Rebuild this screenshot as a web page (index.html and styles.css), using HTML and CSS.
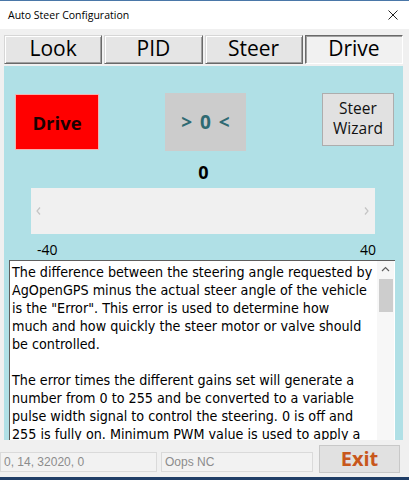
FILE: index.html
```html
<!DOCTYPE html>
<html>
<head>
<meta charset="utf-8">
<title>Auto Steer Configuration</title>
<link rel="stylesheet" href="styles.css">
</head>
<body>
<div class="window">
  <div class="titlebar">
    <span class="title">Auto Steer Configuration</span>
    <svg class="close" width="10" height="10" viewBox="0 0 10 10"><path d="M0.5 0.5 L9.5 9.5 M9.5 0.5 L0.5 9.5" stroke="#222" stroke-width="1" fill="none"/></svg>
  </div>
  <div class="body">
    <div class="tabs">
      <div class="tab">Look</div>
      <div class="tab">PID</div>
      <div class="tab">Steer</div>
      <div class="tab selected">Drive</div>
    </div>
    <div class="panel">
      <div class="controls">
        <div class="btn btn-drive">Drive</div>
        <div class="btn btn-center">&gt; 0 &lt;</div>
        <div class="btn btn-wizard">Steer<br>Wizard</div>
      </div>
      <div class="value">0</div>
      <div class="hscroll">
        <svg width="5" height="8" viewBox="0 0 5 8"><path d="M4 0.5 L1 4 L4 7.5" stroke="#c4c4c4" stroke-width="1.2" fill="none"/></svg>
        <svg width="5" height="8" viewBox="0 0 5 8"><path d="M1 0.5 L4 4 L1 7.5" stroke="#c4c4c4" stroke-width="1.2" fill="none"/></svg>
      </div>
      <div class="scale"><span>-40</span><span>40</span></div>
      <div class="textbox">
        <div class="text">
          <p>The difference between the steering angle requested by<br>AgOpenGPS minus the actual steer angle of the vehicle<br>is the "Error". This error is used to determine how<br>much and how quickly the steer motor or valve should<br>be controlled.</p>
          <p>The error times the different gains set will generate a<br>number from 0 to 255 and be converted to a variable<br>pulse width signal to control the steering. 0 is off and<br>255 is fully on. Minimum PWM value is used to apply a</p>
        </div>
        <div class="vscroll">
          <svg class="up" width="9" height="6" viewBox="0 0 9 6"><path d="M1 5 L4.5 1.5 L8 5" stroke="#606060" stroke-width="1.2" fill="none"/></svg>
          <div class="thumb"></div>
        </div>
      </div>
    </div>
    <div class="footer">
      <div class="status s1">0, 14, 32020, 0</div>
      <div class="status s2">Oops NC</div>
      <div class="btn-exit">Exit</div>
    </div>
  </div>
  <div class="bottomline"></div>
</div>
</body>
</html>
```
FILE: styles.css
```css
* { box-sizing: border-box; }
html, body { margin: 0; padding: 0; }
body {
  width: 409px;
  height: 480px;
  overflow: hidden;
  background: #f0f0f0;
  font-family: "Open Sans", "Noto Sans", sans-serif;
}
.window {
  width: 409px;
  height: 480px;
  display: flex;
  flex-direction: column;
}
.titlebar {
  height: 29px;
  background: #ffffff;
  border-top: 1px solid #4a77a8;
  display: flex;
  align-items: center;
  justify-content: space-between;
  padding: 0 11px 0 8px;
}
.title {
  font-size: 10.5px;
  color: #000;
}
.close { display: block; }
.body {
  flex: 1;
  display: flex;
  flex-direction: column;
  background: #f0f0f0;
}
.tabs {
  display: grid;
  grid-template-columns: repeat(4, 1fr);
  column-gap: 2px;
  padding: 6px 6px 0 4px;
}
.tab {
  height: 29px;
  background: #e5e5e5;
  border: 1px solid;
  border-color: #d6d6d6 #696969 #696969 #d6d6d6;
  box-shadow: inset 1px 1px 0 #ffffff, inset -1px -1px 0 #a0a0a0;
  font-size: 21px;
  line-height: 25px;
  text-align: center;
  color: #000;
}
.tab.selected {
  background: #f1f1f1;
  border-color: #696969 #ffffff #ffffff #696969;
  box-shadow: inset 1px 1px 0 #a0a0a0;
}
.panel {
  margin: 2px 6px 0 4px;
  height: 374px;
  background: #b0e0e6;
  display: flex;
  flex-direction: column;
  overflow: hidden;
}
.controls {
  display: flex;
  align-items: flex-start;
  margin-top: 27px;
  padding: 0 9px 0 11px;
}
.btn {
  display: flex;
  align-items: center;
  justify-content: center;
  text-align: center;
}
.btn-drive {
  width: 84px;
  height: 56px;
  margin-top: 1px;
  background: #ff0000;
  border: 1px solid #f2b3b3;
  font-weight: bold;
  font-size: 18.5px;
  color: #1c0000;
}
.btn-center {
  width: 81px;
  height: 58px;
  margin-left: 66px;
  background: #cccccc;
  font-weight: bold;
  font-size: 19px;
  word-spacing: 3px;
  color: #2f6a72;
}
.btn-wizard {
  width: 72px;
  height: 53px;
  margin-left: auto;
  padding-bottom: 4px;
  background: #e1e1e1;
  border: 1px solid #adadad;
  font-size: 15.5px;
  line-height: 20px;
  color: #111;
}
.value {
  margin-top: 10px;
  text-align: center;
  font-weight: bold;
  font-size: 18px;
  line-height: 22px;
  color: #000;
}
.hscroll {
  margin: 5px 28px 0 27px;
  height: 46px;
  background: #f0f0f0;
  display: flex;
  align-items: center;
  justify-content: space-between;
  padding: 0 6px 0 5px;
}
.hscroll svg { display: block; }
.scale {
  margin-top: 6px;
  display: flex;
  justify-content: space-between;
  padding: 0 27px 0 33px;
  font-size: 14px;
  line-height: 19px;
  color: #000;
}
.textbox {
  margin: 1px 8px 0 5px;
  flex: 1;
  background: #ffffff;
  border-top: 1px solid #5f5f5f;
  border-left: 1px solid #5f5f5f;
  display: flex;
  overflow: hidden;
}
.text {
  flex: 1;
  padding-left: 2px;
  margin-top: 2px;
  font-family: "DejaVu Sans Condensed", "DejaVu Sans", sans-serif;
  font-size: 14.2px;
  line-height: 18px;
  color: #000;
  white-space: nowrap;
}
.text p { margin: 0 0 18px 0; }
.vscroll {
  width: 17px;
  margin-right: 1px;
  background: #f7f7f7;
  display: flex;
  flex-direction: column;
  align-items: center;
}
.vscroll .up { display: block; margin-top: 5px; }
.thumb {
  width: 14px;
  height: 33px;
  margin-top: 7px;
  background: #cdcdcd;
}
.footer {
  flex: 1;
  display: flex;
  align-items: flex-start;
  padding: 0 9px 0 0;
}
.status {
  margin-top: 12px;
  height: 20px;
  background: #f2f2f2;
  border: 1px solid #dadada;
  font-family: "Liberation Sans", Arial, sans-serif;
  font-size: 12px;
  line-height: 18px;
  color: #8c8c8c;
  padding-left: 3px;
}
.s1 { width: 157px; }
.s2 { width: 152px; margin-left: 4px; }
.btn-exit {
  margin-left: auto;
  margin-top: 5px;
  width: 81px;
  height: 28px;
  background: #e1e1e1;
  border: 1px solid #c8c8c8;
  font-weight: bold;
  font-size: 20px;
  line-height: 25px;
  text-align: center;
  color: #c8571b;
}
.bottomline {
  height: 3px;
  background: #1f3d66;
}
```
